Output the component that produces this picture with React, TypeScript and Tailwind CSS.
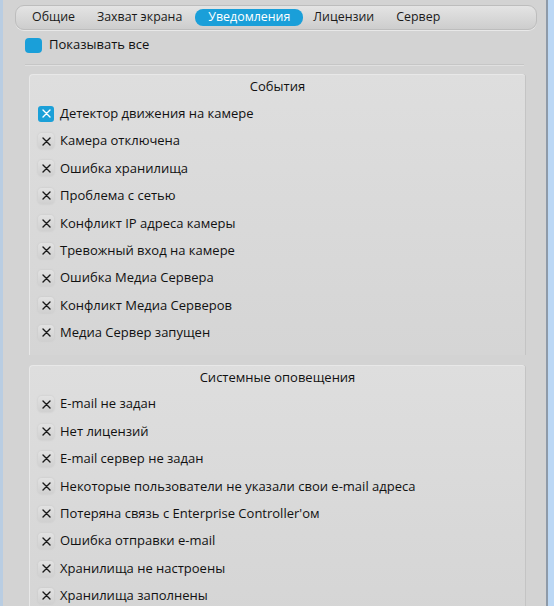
import React from 'react';

const tabs = ['Общие', 'Захват экрана', 'Уведомления', 'Лицензии', 'Сервер'];

const events = [
  'Детектор движения на камере',
  'Камера отключена',
  'Ошибка хранилища',
  'Проблема с сетью',
  'Конфликт IP адреса камеры',
  'Тревожный вход на камере',
  'Ошибка Медиа Сервера',
  'Конфликт Медиа Серверов',
  'Медиа Сервер запущен',
];

const system = [
  'E-mail не задан',
  'Нет лицензий',
  'E-mail сервер не задан',
  'Некоторые пользователи не указали свои e-mail адреса',
  'Потеряна связь с Enterprise Controller\'ом',
  'Ошибка отправки e-mail',
  'Хранилища не настроены',
  'Хранилища заполнены',
];

const Cross = ({ color }: { color: string }) => (
  <svg width="9" height="9" viewBox="0 0 9 9">
    <path d="M1 1 L8 8 M8 1 L1 8" stroke={color} strokeWidth="1.4" strokeLinecap="round" />
  </svg>
);

const Check = ({ on }: { on: boolean }) =>
  on ? (
    <div className="w-[16px] h-[16px] rounded-[3px] bg-[#1ba0d8] flex items-center justify-center shrink-0">
      <Cross color="#ffffff" />
    </div>
  ) : (
    <div className="w-[16px] h-[16px] rounded-[4px] bg-gradient-to-b from-[#e2e2e2] to-[#d0d0d0] shadow-[0_0_2px_#c2c2c2] flex items-center justify-center shrink-0">
      <Cross color="#1a1a1a" />
    </div>
  );

const Panel = ({ title, items, first }: { title: string; items: string[]; first?: boolean }) => (
  <div className="ml-[26px] mr-[21px] rounded-tl-[4px] rounded-tr-[3px] border-l border-t border-[#e8e8e8] bg-gradient-to-b from-[#dedede] to-[#d5d5d5] shadow-[1px_0_0_#c4c4c4]">
    <div className="h-[24px] flex items-center justify-center text-[#111]">{title}</div>
    <div className="flex flex-col pt-[1px] pb-[8px]">
      {items.map((t, i) => (
        <div key={t} className="h-[27.4px] flex items-center gap-[6px] pl-[8px]">
          <Check on={!!first && i === 0} />
          <span className="text-[#111]">{t}</span>
        </div>
      ))}
    </div>
  </div>
);

export default function App() {
  return (
    <div
      className="w-[554px] h-[606px] overflow-hidden flex bg-[#d3d3d3] text-[13px]"
      style={{ fontFamily: '"Open Sans", "DejaVu Sans", sans-serif' }}
    >
      <div className="w-[3px] bg-[#b9cde2] shrink-0" />
      <div className="flex-1 flex flex-col">
        <div className="pt-[5px] pl-[12px] pr-[9px]">
          <div className="h-[25px] rounded-[9px] border border-[#bdbdbd] bg-gradient-to-b from-[#e4e4e4] to-[#cdcdcd] flex items-center px-[5px] shadow-[0_1px_0_#e8e8e8] text-[12.4px]">
            {tabs.map((t) => (
              <div
                key={t}
                className={
                  t === 'Уведомления'
                    ? 'h-[17px] px-[13px] ml-[2px] mr-[-1px] rounded-[8px] bg-[#1a9fd9] text-white flex items-center'
                    : 'h-[17px] px-[11px] text-[#1a1a1a] flex items-center'
                }
              >
                {t}
              </div>
            ))}
          </div>
        </div>
        <div className="flex items-center gap-[7px] pl-[22px] mt-[7px] h-[16px]">
          <div className="w-[17px] h-[15px] rounded-[4px] bg-[#1a9fd9]" />
          <span className="text-[#111]">Показывать все</span>
        </div>
        <div className="mx-[22px] mt-[11px] h-[2px] border-t border-[#c6c6c6] border-b-[#e0e0e0] border-b" />
        <div className="mt-[8px]">
          <Panel title="События" items={events} first />
        </div>
        <div className="mt-[10px]">
          <Panel title="Системные оповещения" items={system} />
        </div>
      </div>
      <div className="w-[2px] bg-[#8e9aa8] shrink-0" />
      <div className="w-[6px] bg-[#bcd8f5] shrink-0" />
    </div>
  );
}
